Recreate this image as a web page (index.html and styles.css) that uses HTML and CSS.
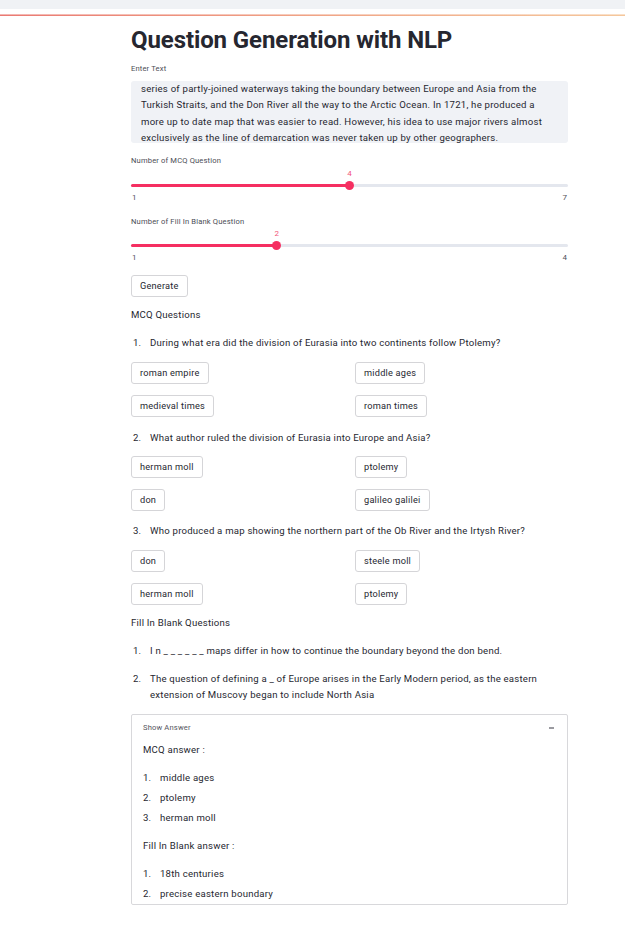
FILE: index.html
```html
<!DOCTYPE html>
<html>
<head>
<meta charset="utf-8">
<link rel="stylesheet" href="styles.css">
</head>
<body>
<div class="topbar"></div>
<div class="deco"></div>
<main class="main">
  <h1 class="title">Question Generation with NLP</h1>

  <div class="label label-enter">Enter Text</div>
  <div class="textarea">series of partly-joined waterways taking the boundary between Europe and Asia from the Turkish Straits, and the Don River all the way to the Arctic Ocean. In 1721, he produced a more up to date map that was easier to read. However, his idea to use major rivers almost exclusively as the line of demarcation was never taken up by other geographers.</div>

  <div class="label label-s1">Number of MCQ Question</div>
  <div class="slider">
    <div class="slider-value-row"><span class="slider-value" style="left:50%">4</span></div>
    <div class="track"><div class="track-fill" style="width:50%"></div><div class="thumb" style="left:50%"></div></div>
    <div class="minmax"><span>1</span><span>7</span></div>
  </div>

  <div class="label label-s2">Number of Fill In Blank Question</div>
  <div class="slider">
    <div class="slider-value-row"><span class="slider-value" style="left:33.333%">2</span></div>
    <div class="track"><div class="track-fill" style="width:33.333%"></div><div class="thumb" style="left:33.333%"></div></div>
    <div class="minmax"><span>1</span><span>4</span></div>
  </div>

  <div class="btn-row"><button class="btn">Generate</button></div>

  <p class="text section">MCQ Questions</p>

  <div class="li q q1"><span class="num">1.</span><span>During what era did the division of Eurasia into two continents follow Ptolemy?</span></div>
  <div class="opts">
    <div><button class="btn">roman empire</button></div>
    <div><button class="btn">middle ages</button></div>
    <div><button class="btn">medieval times</button></div>
    <div><button class="btn">roman times</button></div>
  </div>

  <div class="li q q2"><span class="num">2.</span><span>What author ruled the division of Eurasia into Europe and Asia?</span></div>
  <div class="opts opts2">
    <div><button class="btn">herman moll</button></div>
    <div><button class="btn">ptolemy</button></div>
    <div><button class="btn">don</button></div>
    <div><button class="btn">galileo galilei</button></div>
  </div>

  <div class="li q q3"><span class="num">3.</span><span>Who produced a map showing the northern part of the Ob River and the Irtysh River?</span></div>
  <div class="opts">
    <div><button class="btn">don</button></div>
    <div><button class="btn">steele moll</button></div>
    <div><button class="btn">herman moll</button></div>
    <div><button class="btn">ptolemy</button></div>
  </div>

  <p class="text section fib-title">Fill In Blank Questions</p>

  <div class="li fib1"><span class="num">1.</span><span>I n _ _ _ _ _ _ maps differ in how to continue the boundary beyond the don bend.</span></div>
  <div class="li fib2"><span class="num">2.</span><span>The question of defining a _ of Europe arises in the Early Modern period, as the eastern extension of Muscovy began to include North Asia</span></div>

  <section class="expander">
    <div class="exp-head"><span class="exp-label">Show Answer</span><span class="exp-minus"></span></div>
    <p class="text exp-sub">MCQ answer :</p>
    <div class="li ans first"><span class="num">1.</span><span>middle ages</span></div>
    <div class="li ans"><span class="num">2.</span><span>ptolemy</span></div>
    <div class="li ans"><span class="num">3.</span><span>herman moll</span></div>
    <p class="text exp-sub exp-sub2">Fill In Blank answer :</p>
    <div class="li ans first"><span class="num">1.</span><span>18th centuries</span></div>
    <div class="li ans"><span class="num">2.</span><span>precise eastern boundary</span></div>
  </section>
</main>
</body>
</html>
```

FILE: styles.css
```css
* { box-sizing: border-box; }
html, body { margin: 0; padding: 0; background: #ffffff; }
body {
  font-family: Roboto, "Liberation Sans", sans-serif;
  color: #262730;
  font-size: 9.6px;
}
.topbar { height: 9px; background: #f0f2f5; }
.deco {
  margin-top: 5px;
  height: 2px;
  background: linear-gradient(90deg, #ea7a73 0%, #f0a486 50%, #f5c79c 100%);
  border-top: 1px solid rgba(255,255,255,0.45);
}
.main {
  width: 437px;
  margin-left: 131px;
  display: flex;
  flex-direction: column;
}
.title {
  margin: 9px 0 0 0;
  font-size: 24px;
  line-height: 30px;
  font-weight: 700;
  color: #262730;
  letter-spacing: -0.1px;
}
.label {
  font-size: 7.6px;
  line-height: 12px;
  color: #4b4c55;
  letter-spacing: 0.15px;
}
.label-enter { margin-top: 8px; }
.textarea {
  margin-top: 6px;
  height: 62px;
  overflow: hidden;
  background: #f0f2f6;
  border-radius: 3px;
  padding: 0 24px 0 10px;
  font-size: 9.6px;
  line-height: 16.3px;
  letter-spacing: 0.23px;
  color: #262730;
}
.label-s1 { margin-top: 12px; }
.label-s2 { margin-top: 13px; }
.slider { display: flex; flex-direction: column; }
.slider-value-row { position: relative; height: 10px; margin-top: 2px; }
.slider-value {
  position: absolute;
  top: 0;
  transform: translateX(-50%);
  font-size: 8px;
  line-height: 10px;
  color: #f2557a;
}
.label-s2 + .slider .slider-value-row { margin-top: 1px; }
.track {
  position: relative;
  height: 10px;
  margin-top: 1px;
}
.track::before {
  content: "";
  position: absolute;
  left: 0; right: 0; top: 3.5px;
  height: 3px;
  background: #e4e7ee;
  border-radius: 2px;
}
.track-fill {
  position: absolute;
  left: 0; top: 3.5px;
  height: 3px;
  background: #f52f61;
  border-radius: 2px;
}
.thumb {
  position: absolute;
  top: 0.5px;
  width: 9px; height: 9px;
  margin-left: -4.5px;
  border-radius: 50%;
  background: #f52f61;
}
.minmax {
  display: flex;
  justify-content: space-between;
  margin-top: 3px;
  font-size: 8px;
  line-height: 10px;
  color: #50515a;
}
.minmax span:first-child { padding-left: 1px; }
.minmax span:last-child { padding-right: 1px; }
.btn-row { margin-top: 12px; display: flex; }
.btn {
  font-family: Roboto, "Liberation Sans", sans-serif;
  font-size: 9.2px;
  line-height: 20px;
  letter-spacing: 0.22px;
  height: 22px;
  padding: 0 8px;
  border: 1px solid #d5d5d8;
  border-radius: 3px;
  background: #ffffff;
  color: #262730;
  cursor: pointer;
}
.text { margin: 0; font-size: 9.6px; line-height: 16px; letter-spacing: 0.22px; }
.section { margin-top: 10px; }
.li { display: flex; font-size: 9.6px; line-height: 16px; letter-spacing: 0.22px; }
.li .num { width: 19px; flex: none; padding-left: 2px; }
.q1 { margin-top: 12px; }
.q2 { margin-top: 13px; }
.q3 { margin-top: 12px; }
.opts {
  display: grid;
  grid-template-columns: 1fr 1fr;
  column-gap: 11px;
  row-gap: 11px;
  margin-top: 11px;
}
.opts2 { margin-top: 10px; }
.opts > div { display: flex; }
.fib-title { margin-top: 10px; }
.fib1 { margin-top: 12px; }
.fib2 { margin-top: 12px; }
.expander {
  margin-top: 11px;
  border: 1px solid #d8d8db;
  border-radius: 2px;
  padding: 7px 11px 2px 11px;
  display: flex;
  flex-direction: column;
}
.exp-head {
  display: flex;
  justify-content: space-between;
  align-items: center;
  height: 12px;
}
.exp-label { font-size: 7.6px; line-height: 12px; color: #555660; letter-spacing: 0.15px; }
.exp-minus {
  width: 5px;
  height: 1.5px;
  background: #9a9aa0;
  margin-right: 2px;
}
.exp-sub { margin-top: 8px; }
.exp-sub2 { margin-top: 12px; }
.ans { margin-top: 4px; }
.ans.first { margin-top: 12px; }
.ans .num { width: 17px; padding-left: 0; }
```
